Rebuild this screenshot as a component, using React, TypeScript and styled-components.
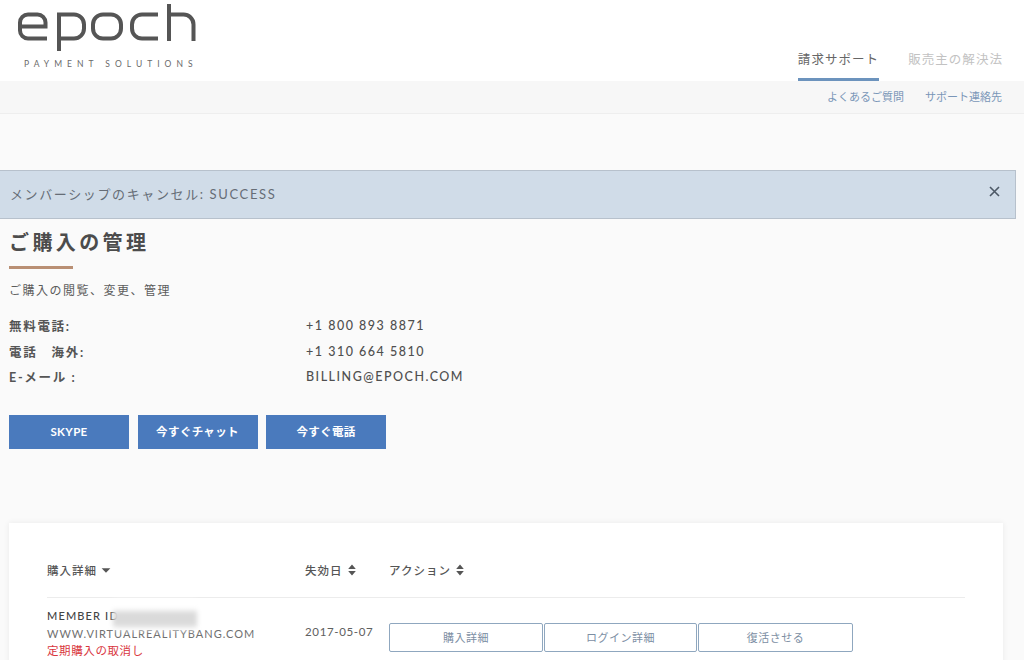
import React from "react";
import styled, { createGlobalStyle } from "styled-components";

const Global = createGlobalStyle`
  html, body { margin: 0; padding: 0; background: #fafafa; height: 660px; overflow: hidden; }
  body { font-family: Lato, "Noto Sans CJK JP", sans-serif; color: #4a4a4a; }
  * { box-sizing: border-box; }
`;
const Page = styled.div`width: 1024px; height: 660px; overflow: hidden;`;
const Header = styled.header`
  height: 81px; background: #fff; display: flex; justify-content: space-between; align-items: flex-end; padding: 0 21px 0 0;
`;
const LogoBox = styled.div`width: 220px; height: 81px; padding: 0 0 0 24px; display: flex; flex-direction: column; position: relative;`;
const LogoMark = styled.svg`width: 200px; height: 55px; margin-left: -24px; display: block; flex: none;`;
const LogoTag = styled.div`
  margin-top: 4px; font-size: 8.5px; line-height: 11px; letter-spacing: 5px; color: #6a6a6a; white-space: nowrap; font-family: Lato, sans-serif;
`;
const Tabs = styled.nav`display: flex; gap: 29px;`;
const Tab = styled.a<{ $active?: boolean }>`
  height: 36px; padding-top: 6px; font-size: 12.5px; line-height: 18px; letter-spacing: 1.05px; white-space: nowrap;
  color: ${(p) => (p.$active ? "#666" : "#c2c2c2")};
  border-bottom: 3px solid ${(p) => (p.$active ? "#6c93bd" : "transparent")};
`;
const SubBar = styled.div`
  height: 33px; background: #f7f7f7; border-bottom: 1px solid #eeeeee; display: flex; justify-content: flex-end; align-items: center; gap: 21px; padding: 0 22px 2px 0;
`;
const SubLink = styled.a`font-size: 11px; color: #7a96b8; white-space: nowrap;`;
const Alert = styled.div`
  margin-top: 56px; width: 1016px; height: 49px; background: #d0dce8; border: 1px solid #b7c1cc; border-left: none;
  display: flex; align-items: center; justify-content: space-between; padding: 0 15px 3px 10px;
  font-size: 13px; letter-spacing: 1.62px; color: #666d76;
`;
const Close = styled.svg`width: 11px; height: 11px; display: block; margin-top: -3px;`;
const Main = styled.main`padding: 0 0 0 9px;`;
const Title = styled.h1`
  margin: 11px 0 0; font-size: 20px; line-height: 24px; font-weight: 700; letter-spacing: 3.4px; color: #4c4c4c; white-space: nowrap;
`;
const Rule = styled.div`width: 64px; height: 3px; margin-top: 12px; background: #b98f74;`;
const Lead = styled.p`margin: 13px 0 0; font-size: 12px; line-height: 18px; letter-spacing: 1.5px; color: #5c5c5c;`;
const Contact = styled.dl`
  margin: 13px 0 0; display: grid; grid-template-columns: 297px 1fr; grid-auto-rows: 25.5px; align-items: center;
`;
const Label = styled.dt`font-size: 12.5px; font-weight: 700; letter-spacing: 1.7px; color: #555; white-space: pre;`;
const Value = styled.dd`margin: 0; font-size: 12.5px; font-weight: 500; letter-spacing: 1.5px; color: #4f4f4f;`;
const Actions = styled.div`display: flex; gap: 8.5px; margin-top: 25.5px;`;
const Solid = styled.button`
  width: 120px; height: 34px; border: none; padding: 0; background: #4a7abd; color: #fff; font: 700 11.5px/34px Lato, "Noto Sans CJK JP", sans-serif; letter-spacing: .35px;
`;
const Card = styled.section`
  margin-top: 74px; width: 994px; height: 200px; background: #fff; box-shadow: 0 0 6px rgba(0,0,0,.07); padding: 36px 38px 0;
`;
const HeadRow = styled.div`
  display: grid; grid-template-columns: 258px 84px 1fr; height: 39px; align-items: center; border-bottom: 1px solid #ececec; padding-bottom: 17px; width: 918px;
`;
const HeadCell = styled.div`display: flex; align-items: center; gap: 4px; font-size: 11.5px; font-weight: 500; letter-spacing: 1px; color: #555; white-space: nowrap;`;
const Caret = styled.svg`width: 10px; height: 12px; display: block;`;
const BodyRow = styled.div`
  display: grid; grid-template-columns: 258px 84px 1fr; padding-top: 9px; width: 918px;
`;
const Purchase = styled.div`display: flex; flex-direction: column; position: relative; font-size: 11px; line-height: 17.5px; letter-spacing: 1px;`;
const Member = styled.div`font-weight: 500; color: #444; letter-spacing: 1.15px;`;
const Site = styled.div`color: #707070; letter-spacing: 1px; white-space: nowrap;`;
const Cancel = styled.a`color: #d9363e; letter-spacing: .6px; font-size: 11.5px;`;
const Redacted = styled.div`
  position: absolute; left: 66px; top: -7px; width: 84px; height: 30px; background: linear-gradient(#fff 0 30%, #dadada 42% 84%, #fff 96%); filter: blur(2.5px);
`;
const Expiry = styled.div`font-size: 11.5px; letter-spacing: .65px; color: #606060; padding-top: 18px;`;
const RowActions = styled.div`display: flex; gap: 1px; padding-top: 16px;`;
const Outline = styled.button<{ $w: number }>`
  width: ${(p) => p.$w}px; height: 29px; padding: 0; background: #fff; border: 1px solid #8fa7bf; border-radius: 2px; color: #7c8ea3; font: 400 11px/27px Lato, "Noto Sans CJK JP", sans-serif; letter-spacing: .5px;
`;

const SortBoth = () => (
  <Caret viewBox="0 0 9 11"><path d="M4.5 0.5 8 4.5H1ZM4.5 10.5 8 6.5H1Z" fill="#555" /></Caret>
);
const SortDown = () => (
  <Caret viewBox="0 0 9 11"><path d="M0.5 4H8.5L4.5 8Z" fill="#555" /></Caret>
);

export default function App() {
  return (
    <Page>
      <Global />
      <Header>
        <LogoBox>
          <LogoMark viewBox="0 0 200 55" role="img" aria-label="epoch logo" fill="none" stroke="#555" strokeWidth="4" strokeLinecap="butt">
            <path d="M47 38.5H28A8 8 0 0 1 20 30.5V22.5A8 8 0 0 1 28 14.5H37.5A8 8 0 0 1 45.500 22.5V26.500H20" />
            <path d="M59 51V14.500H74A10 10 0 0 1 84 24.500V28.500A10 10 0 0 1 74 38.500H59" />
            <rect x="93" y="14.500" width="28" height="24" rx="10" />
            <path d="M158 14.500H142A10 10 0 0 0 132 24.500V28.500A10 10 0 0 0 142 38.500H158" />
            <path d="M169 4V41M169 14.500H183A10 10 0 0 1 193.500 24.500V41" />
          </LogoMark>
          <LogoTag>PAYMENT SOLUTIONS</LogoTag>
        </LogoBox>
        <Tabs>
          <Tab $active>請求サポート</Tab>
          <Tab>販売主の解決法</Tab>
        </Tabs>
      </Header>
      <SubBar>
        <SubLink>よくあるご質問</SubLink>
        <SubLink>サポート連絡先</SubLink>
      </SubBar>
      <Alert>
        <span>メンバーシップのキャンセル: SUCCESS</span>
        <Close viewBox="0 0 11 11"><path d="M1 1 10 10M10 1 1 10" stroke="#4d5966" strokeWidth="1.6" /></Close>
      </Alert>
      <Main>
        <Title>ご購入の管理</Title>
        <Rule />
        <Lead>ご購入の閲覧、変更、管理</Lead>
        <Contact>
          <Label>無料電話:</Label><Value>+1 800 893 8871</Value>
          <Label>電話　海外:</Label><Value>+1 310 664 5810</Value>
          <Label>E-メール :</Label><Value>BILLING@EPOCH.COM</Value>
        </Contact>
        <Actions>
          <Solid>SKYPE</Solid>
          <Solid>今すぐチャット</Solid>
          <Solid>今すぐ電話</Solid>
        </Actions>
        <Card>
          <HeadRow>
            <HeadCell>購入詳細 <SortDown /></HeadCell>
            <HeadCell>失効日 <SortBoth /></HeadCell>
            <HeadCell>アクション <SortBoth /></HeadCell>
          </HeadRow>
          <BodyRow>
            <Purchase>
              <Member>MEMBER ID</Member>
              <Site>WWW.VIRTUALREALITYBANG.COM</Site>
              <Cancel>定期購入の取消し</Cancel>
              <Redacted />
            </Purchase>
            <Expiry>2017-05-07</Expiry>
            <RowActions>
              <Outline $w={154}>購入詳細</Outline>
              <Outline $w={153}>ログイン詳細</Outline>
              <Outline $w={155}>復活させる</Outline>
            </RowActions>
          </BodyRow>
        </Card>
      </Main>
    </Page>
  );
}
